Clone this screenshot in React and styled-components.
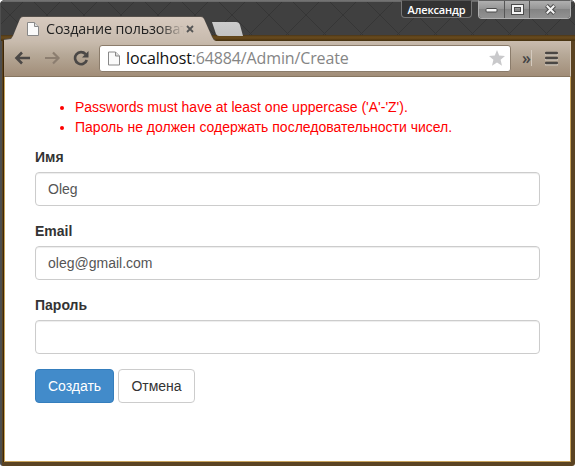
import React from 'react';
import styled, { createGlobalStyle } from 'styled-components';

const GlobalStyle = createGlobalStyle`
  * { box-sizing: border-box; }
  body { margin: 0; background: #fff; overflow: hidden; }
`;

const Window = styled.div`
  width: 575px;
  height: 466px;
  display: flex;
  flex-direction: column;
  padding: 0 4px 4px 4px;
  border-radius: 5px 5px 3px 3px;
  overflow: hidden;
  background:
    linear-gradient(#8f8f8f, #666) 0 0 / 100% 2px no-repeat,
    linear-gradient(#4d4d4d, #4d4d4d) 0 0 / 2px 100% no-repeat,
    linear-gradient(90deg, #5b431f 1px, #3c2608 1px) 2px 36px / 2px 426px no-repeat,
    #5b4322;
`;

const TitleBar = styled.header`
  height: 41px;
  margin: 0 -4px;
  padding-left: 4px;
  display: flex;
  align-items: flex-start;
  background:
    linear-gradient(#777, #666) 0 0 / 100% 2px no-repeat,
    linear-gradient(#4f4f4f, #4f4f4f) 0 0 / 1px 100% no-repeat,
    linear-gradient(#4a3619 0, #674a1c 2px, #60431a 4px, #49340f 5px, #493614 6px) 0 35px / 100% 6px no-repeat,
    repeating-linear-gradient(45deg, transparent 0 24.9px, #363636 25.2px 25.7px, #4c4c4c 26.16px) 0 0,
    repeating-linear-gradient(-45deg, transparent 0 24.9px, #363636 25.2px 25.7px, #4c4c4c 26.16px) 0 0,
    #404040;
`;

const TabOutline = styled.div`
  margin-top: 17px;
  filter: drop-shadow(0 -1px 0 #55504b);
`;

const Tab = styled.div`
  width: 212px;
  height: 24px;
  display: flex;
  align-items: center;
  padding: 0 0 1px 23px;
  background: linear-gradient(#d7cabf, #c8bbae);
  clip-path: path('M0 24 L0 23 L7 22 L9 19 L16 2 Q17 0 19 0 L197 0 Q199 0 200 2 L208 20 Q209 23 212 24 Z');
`;

const TabTitle = styled.span`
  width: 140px;
  margin-left: 7px;
  overflow: hidden;
  white-space: nowrap;
  font: 14.3px/22px 'Open Sans', 'Noto Sans', sans-serif;
  letter-spacing: -0.12px;
  color: #222;
  mask-image: linear-gradient(90deg, #000 113px, transparent 138px);
`;

const NewTab = styled.div`
  width: 31px;
  height: 14px;
  margin: 22px 0 0 -4px;
  background: linear-gradient(#ccc, #c2c2c2);
  clip-path: path('M0 0 L24 0 Q27 0 28 3 L31 14 L7 14 Q5 14 4 12 Z');
`;

const UserBadge = styled.div`
  width: 71px;
  height: 18px;
  margin-left: auto;
  border: 1px solid #777;
  border-top-color: #555;
  border-radius: 0 0 4px 4px;
  background: #333;
  color: #fff;
  font: 600 11px/17px 'Open Sans', 'Noto Sans', sans-serif;
  letter-spacing: -0.15px;
  text-align: center;
`;

const WindowButtons = styled.div`
  display: flex;
  width: 93px;
  height: 19px;
  margin: 0 4px 0 6px;
  border: 1px solid #b0b0b0;
  border-top-color: #606060;
  border-radius: 0 0 4px 4px;
  overflow: hidden;
`;

const WindowButton = styled.div`
  flex: 0 0 ${(p) => p.$width}px;
  display: flex;
  align-items: center;
  justify-content: center;
  border-left: ${(p) => (p.$divided ? '1px solid #555' : '0')};
  background: linear-gradient(#b0b0b0, #969696 45%, #848484 50%, #929292);
`;

const Toolbar = styled.nav`
  height: 36px;
  margin-right: 0;
  padding: 0 8px 1px 10px;
  display: flex;
  align-items: center;
  border-right: 1px solid #d4c6b5;
  background: linear-gradient(#c9bcae, #b6a897 40%, #a18d78);
  border-bottom: 1px solid #877661;
`;

const NavIcon = styled.svg`
  display: block;
  flex: none;
  margin-right: ${(p) => p.$gap || 0}px;
`;

const AddressBar = styled.div`
  width: 412px;
  height: 27px;
  display: flex;
  align-items: center;
  padding: 0 5px 0 8px;
  border: 1px solid #8b7c6b;
  border-radius: 3px;
  background: #fff;
`;

const Address = styled.span`
  flex: 1;
  margin-left: 6px;
  font: 16px/24px 'Open Sans', 'Noto Sans', sans-serif;
  letter-spacing: -0.14px;
  color: #858585;
  white-space: nowrap;
`;

const Host = styled.span`
  color: #111;
`;

const Overflow = styled.span`
  width: 21px;
  padding-left: 11px;
  margin-right: 13px;
  border-right: 1px solid #d4cabe;
  font: 600 16px/16px 'Open Sans', sans-serif;
  color: #444;
`;

const Page = styled.main`
  flex: 1;
  padding: 20px 30px 0;
  border: 1px solid #c9a45c;
  border-top: 0;
  background: #fff;
  font: 14px/20px 'Liberation Sans', Arial, sans-serif;
  color: #333;
`;

const Errors = styled.ul`
  margin: 0 0 10px;
  padding-left: 40px;
  color: #f00;
`;

const ErrorItem = styled.li`
  white-space: nowrap;
  letter-spacing: ${(p) => p.$spacing || 0}px;
`;

const Field = styled.div`
  margin-bottom: 15px;
`;

const Label = styled.label`
  display: block;
  margin-bottom: 5px;
  font-weight: 700;
`;

const Input = styled.input`
  display: block;
  width: 505px;
  height: 34px;
  padding: 6px 12px;
  border: 1px solid #ccc;
  border-radius: 4px;
  background: #fff;
  box-shadow: inset 0 1px 1px rgba(0, 0, 0, 0.075);
  font: inherit;
  color: #555;
  outline: 0;
`;

const Actions = styled.div`
  display: flex;
  gap: 4px;
`;

const Button = styled.button`
  width: ${(p) => p.$width}px;
  height: 34px;
  padding: 0;
  border: 1px solid ${(p) => (p.$primary ? '#357ebd' : '#ccc')};
  border-radius: 4px;
  background: ${(p) => (p.$primary ? '#428bca' : '#fff')};
  color: ${(p) => (p.$primary ? '#fff' : '#333')};
  font: inherit;
`;

function FileIcon({ width, height }) {
  return (
    <NavIcon width={width} height={height} viewBox="0 0 12 14">
      <path d="M.5.5h7l4 4v9H.5z" fill="#fafafa" stroke="#888" />
      <path d="M7.5.5v4h4" fill="#ddd" stroke="#888" />
    </NavIcon>
  );
}

const fields = [
  { id: 'name', label: 'Имя', value: 'Oleg' },
  { id: 'email', label: 'Email', value: 'oleg@gmail.com' },
  { id: 'password', label: 'Пароль', value: '' },
];

export default function App() {
  return (
    <>
      <GlobalStyle />
      <Window>
        <TitleBar>
          <TabOutline>
            <Tab>
              <FileIcon width={12} height={14} />
              <TabTitle>Создание пользователя</TabTitle>
              <NavIcon width="8" height="8" viewBox="0 0 8 8">
                <path d="M1 1l6 6M7 1L1 7" stroke="#555" strokeWidth="1.8" />
              </NavIcon>
            </Tab>
          </TabOutline>
          <NewTab />
          <UserBadge>Александр</UserBadge>
          <WindowButtons>
            <WindowButton $width={25}>
              <NavIcon width="13" height="7" viewBox="0 0 13 7">
                <rect x="1" y="2.5" width="11" height="3.5" rx="1" fill="#f4f4f4" stroke="#4a4a4a" />
              </NavIcon>
            </WindowButton>
            <WindowButton $width={25} $divided>
              <NavIcon width="13" height="11" viewBox="0 0 13 11">
                <rect x="2" y="2" width="9" height="7" fill="none" stroke="#4a4a4a" strokeWidth="4" />
                <rect x="2" y="2" width="9" height="7" fill="none" stroke="#f4f4f4" strokeWidth="2" />
              </NavIcon>
            </WindowButton>
            <WindowButton $width={41} $divided>
              <NavIcon width="13" height="11" viewBox="0 0 13 11">
                <path d="M2.5 1.5l8 8M10.5 1.5l-8 8" stroke="#4a4a4a" strokeWidth="4" />
                <path d="M2.8 1.8l7.4 7.4M10.2 1.8L2.8 9.2" stroke="#f4f4f4" strokeWidth="2.1" />
              </NavIcon>
            </WindowButton>
          </WindowButtons>
        </TitleBar>
        <Toolbar>
          <NavIcon width="17" height="14" viewBox="0 0 17 14" $gap={13}>
            <path d="M16 7H2.5M8 1.5L2.5 7L8 12.5" fill="none" stroke="#4b4846" strokeWidth="2.6" />
          </NavIcon>
          <NavIcon width="17" height="14" viewBox="0 0 17 14" $gap={12}>
            <path d="M1 7h13.5M9 1.5L14.5 7L9 12.5" fill="none" stroke="#8c7e70" strokeWidth="2.2" />
          </NavIcon>
          <NavIcon width="17" height="16" viewBox="0 0 17 16" $gap={9}>
            <path d="M12.6 4.2A6 6 0 1 0 13.8 10" fill="none" stroke="#4b4846" strokeWidth="2.6" />
            <path d="M15.5 1v6.5H9z" fill="#4b4846" />
          </NavIcon>
          <AddressBar>
            <FileIcon width={12} height={15} />
            <Address>
              <Host>localhost</Host>:64884/Admin/Create
            </Address>
            <NavIcon width="16" height="16" viewBox="0 0 16 16">
              <path d="M8 0l2.2 5.5 5.8.4-4.4 3.8 1.4 6L8 12.4l-5 3.3 1.4-6L0 5.9l5.8-.4z" fill="#c9c9cb" />
            </NavIcon>
          </AddressBar>
          <Overflow>»</Overflow>
          <NavIcon width="13" height="15" viewBox="0 0 13 15">
            <path d="M1 3h11M1 8h11M1 13h11" stroke="#d1c7bb" strokeWidth="3" strokeLinecap="round" />
            <path d="M1.2 2h10.6M1.2 7h10.6M1.2 12h10.6" stroke="#4a4744" strokeWidth="2.6" strokeLinecap="round" />
          </NavIcon>
        </Toolbar>
        <Page>
          <Errors>
            <ErrorItem>Passwords must have at least one uppercase ('A'-'Z').</ErrorItem>
            <ErrorItem>Пароль не должен содержать последовательности чисел.</ErrorItem>
          </Errors>
          {fields.map((f) => (
            <Field key={f.id}>
              <Label htmlFor={f.id}>{f.label}</Label>
              <Input id={f.id} defaultValue={f.value} />
            </Field>
          ))}
          <Actions>
            <Button $primary $width={79}>Создать</Button>
            <Button $width={77}>Отмена</Button>
          </Actions>
        </Page>
      </Window>
    </>
  );
}
